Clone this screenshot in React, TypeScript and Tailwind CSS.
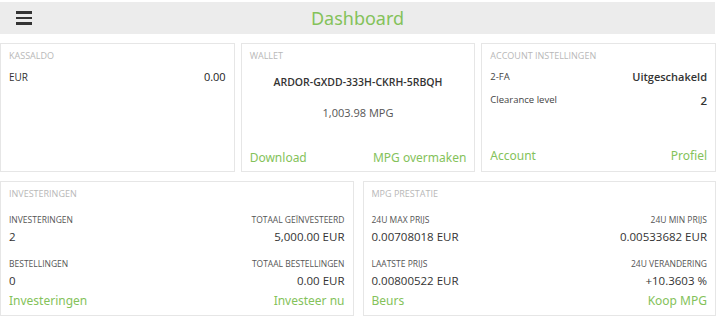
import React from "react";

const green = "text-[#84c25a]";

const Card = ({
  title,
  className = "",
  children,
}: {
  title: string;
  className?: string;
  children: React.ReactNode;
}) => (
  <div
    className={`flex flex-col border border-[#e6e6e6] bg-white px-2 pt-[6px] ${className}`}
  >
    <div className="text-[9px] uppercase leading-[12px] text-[#b8b8b8]">{title}</div>
    {children}
  </div>
);

const Links = ({ left, right }: { left: string; right: string }) => (
  <div
    className={`mt-auto flex justify-between font-['Noto_Sans',sans-serif] text-[12px] leading-[16px] ${green}`}
  >
    <span>{left}</span>
    <span>{right}</span>
  </div>
);

const Stat = ({
  label,
  value,
  right = false,
}: {
  label: string;
  value: string;
  right?: boolean;
}) => (
  <div className={right ? "text-right" : ""}>
    <div className="text-[8.5px] uppercase leading-[12px] text-[#555]">{label}</div>
    <div className="mt-[4px] text-[11.5px] font-medium leading-[14px] text-[#333]">{value}</div>
  </div>
);

export default function App() {
  return (
    <div className="h-[317px] w-[720px] overflow-hidden bg-white font-['Open_Sans',sans-serif]">
      <header className="mt-[2px] flex h-8 w-[715px] items-center bg-[#ececec]">
        <button className="ml-4 flex w-4 flex-col gap-[3px]">
          <span className="h-[2.5px] w-4 bg-[#333]" />
          <span className="h-[2.5px] w-4 bg-[#333]" />
          <span className="h-[2.5px] w-4 bg-[#333]" />
        </button>
        <h1
          className={`-ml-8 flex-1 text-center font-['Noto_Sans',sans-serif] text-[18px] ${green}`}
        >
          Dashboard
        </h1>
      </header>

      <div className="mt-[9px] grid h-[129px] w-[716px] grid-cols-3 gap-[6px]">
        <Card title="Kassaldo" className="pb-[6px]">
          <div className="mt-[7px] flex items-center justify-between">
            <span className="text-[10px] text-[#333]">EUR</span>
            <span className="text-[11px] text-[#222]">0.00</span>
          </div>
        </Card>
        <Card title="Wallet" className="pb-[5px]">
          <div className="mt-[13px] text-center text-[10.5px] font-semibold text-[#333]">
            ARDOR-GXDD-333H-CKRH-5RBQH
          </div>
          <div className="mt-[14px] text-center text-[11px] text-[#555]">1,003.98 MPG</div>
          <Links left="Download" right="MPG overmaken" />
        </Card>
        <Card title="Account instellingen" className="pb-[7px]">
          <div className="mt-[7px] flex items-center justify-between">
            <span className="text-[9.5px] text-[#444]">2-FA</span>
            <span className="text-[11px] font-semibold text-[#333]">Uitgeschakeld</span>
          </div>
          <div className="mt-[6px] flex items-center justify-between">
            <span className="text-[9.5px] text-[#444]">Clearance level</span>
            <span className="text-[11.5px] font-semibold text-[#333]">2</span>
          </div>
          <Links left="Account" right="Profiel" />
        </Card>
      </div>

      <div className="mt-[9px] grid h-[135px] w-[716px] grid-cols-2 gap-[9px]">
        <Card title="Investeringen" className="pb-[6px]">
          <div className="mt-[14px] flex justify-between">
            <Stat label="Investeringen" value="2" />
            <Stat label="Totaal geïnvesteerd" value="5,000.00 EUR" right />
          </div>
          <div className="mt-[14px] flex justify-between">
            <Stat label="Bestellingen" value="0" />
            <Stat label="Totaal bestellingen" value="0.00 EUR" right />
          </div>
          <Links left="Investeringen" right="Investeer nu" />
        </Card>
        <Card title="MPG prestatie" className="pb-[6px]">
          <div className="mt-[14px] flex justify-between">
            <Stat label="24u max prijs" value="0.00708018 EUR" />
            <Stat label="24u min prijs" value="0.00533682 EUR" right />
          </div>
          <div className="mt-[14px] flex justify-between">
            <Stat label="Laatste prijs" value="0.00800522 EUR" />
            <Stat label="24u verandering" value="+10.3603 %" right />
          </div>
          <Links left="Beurs" right="Koop MPG" />
        </Card>
      </div>
    </div>
  );
}
